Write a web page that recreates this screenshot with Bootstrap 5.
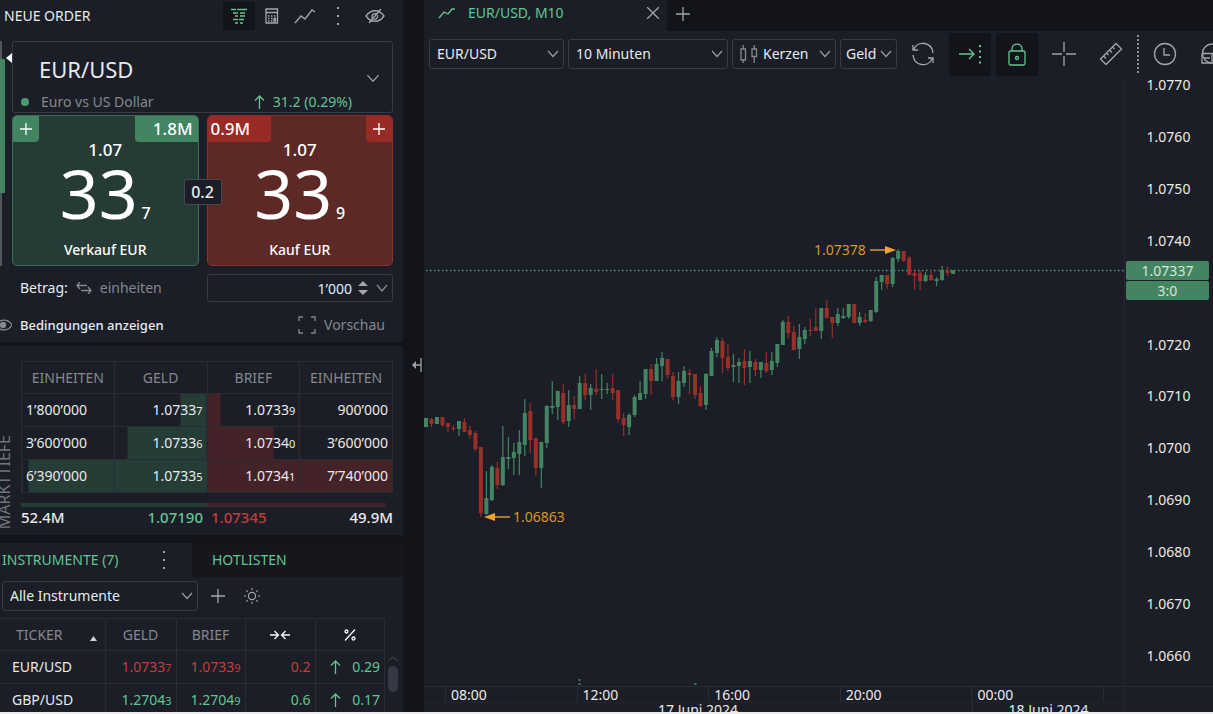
<!DOCTYPE html>
<html lang="de" data-bs-theme="dark">
<head>
<meta charset="utf-8">
<meta name="viewport" content="width=device-width, initial-scale=1">
<title>EUR/USD, M10</title>
<link href="https://cdn.jsdelivr.net/npm/bootstrap@5.3.0/dist/css/bootstrap.min.css" rel="stylesheet">
<style>
:root{--panel:#1b1e26;--deep:#121419;--line:#2b2e37;--edge:#383b44;--muted:#85888f;--fg:#e9eaec;--up:#62c592;--down:#c43d3a;--green:#428560;--red:#982b26}
body{font-family:"Noto Sans",sans-serif;font-size:14px;line-height:20px;background:var(--deep);color:var(--fg);border-bottom:2px solid #eceaea}
svg{fill:none;stroke:currentColor;stroke-width:1.3;flex:none;display:block}
.side{width:403px;flex:none}
.pane{background:var(--panel)}
.muted{color:var(--muted)}
.up{color:var(--up)}
.down{color:var(--down)}
.ico{width:32px;height:28px;padding:0;border:0;border-radius:2px;background:none;color:#a3a6ab;display:flex;align-items:center;justify-content:center;flex:none}
.ico.on{background:var(--deep);color:var(--up)}
.ico.muted{color:var(--muted)}
.tool{width:42px;height:43px}
.form-select,.form-control{background-color:var(--panel);border:1px solid var(--edge);border-radius:3px;color:var(--fg);font-size:14px;line-height:20px;height:30px;padding:0 24px 0 7px;min-width:0}
.form-select{background-image:url("data:image/svg+xml,%3csvg xmlns='http://www.w3.org/2000/svg' viewBox='0 0 12 8'%3e%3cpath fill='none' stroke='%239a9da3' stroke-width='1.2' d='M1 1l5 5.500 5-5.500'/%3e%3c/svg%3e");
 background-size:12px 8px;background-position:right 4px center}
.head-row{height:32px}
.order{padding:9px 10px 0 12px;height:310px}
.gauge{position:absolute;left:0;top:9px;width:5px;height:225px;border-left:2px solid #53565e}
.gauge i{position:absolute;left:-2px;top:18px;width:5px;height:134px;background:var(--green)}
.gauge b{position:absolute;left:4px;top:12px;border:5px solid transparent;border-left:0;border-right:6px solid #fff}
.symbol{border:1px solid var(--edge);border-radius:3px;height:72px}
.symbol .form-select{border:0;font-size:22px;line-height:30px;height:38px;padding-left:26px;background-size:14px 9px;background-position:right 12px bottom 5px}
.dot{width:8px;height:8px;border-radius:50%;background:#4f9b74}
.deals{margin-top:2px}
.deal{position:relative;flex:1 1 0;height:151px;border:1px solid;border-radius:5px;color:#fff;padding:24px 0 1px;text-align:center;display:flex;flex-direction:column;align-items:center;overflow:hidden}
.sell{background:#263b35;border-color:#3a6f57}
.buy{background:#5c2927;border-color:#8a2f2a}
.corner{position:absolute;top:0;font-size:17px;line-height:26px;height:26px;width:63px;padding:0 5px 0 3px;font-weight:500}
.sell .corner{background:var(--green)}
.buy .corner{background:var(--red)}
.corner.plus{width:26px;padding:7px}
.corner.start-0{border-bottom-right-radius:4px}
.corner.end-0{border-bottom-left-radius:4px}
.pip{font-size:17px;line-height:20px;font-weight:500}
.big{font-size:68px;line-height:66px}
.tail{font-size:16px;line-height:18px;font-weight:500}
.spread{position:absolute;left:50%;top:64px;transform:translateX(-50%);width:38px;height:26px;line-height:24px;text-align:center;font-size:16px;font-weight:500;background:var(--panel);border:1px solid #454851;border-radius:3px}
.terms{font-size:13px;font-weight:500}
.amount{width:186px;height:28px}
.amount .form-control{border:0;background:none;height:26px;padding:0 2px;text-align:right}
.grid-table{--bs-table-bg:transparent;--bs-table-color:var(--fg);table-layout:fixed;margin:0;border-color:var(--line)}
.grid-table th,.grid-table td{padding:0 4px;height:33px;vertical-align:middle;border:1px solid #292c35;font-weight:400;color:inherit;white-space:nowrap}
.grid-table th{color:var(--muted);text-align:center;padding:0;height:32px}
.grid-table small{font-size:11px}
.depth{padding:15px 10px 0 21px;height:189px}
.depth-name{position:absolute;left:-6px;bottom:6px;writing-mode:vertical-rl;transform:rotate(180deg);font-size:16px;color:#72757c}
.grid-table td.bid{background:linear-gradient(to left,#263c36 var(--fill),transparent 0)}
.grid-table td.ask{background:linear-gradient(to right,#432327 var(--fill),transparent 0)}
.totals{height:4px;margin-top:10px}
.sums{font-size:15px;font-weight:500;line-height:20px}
.sums .fg{font-size:14px}
.watch-tabs{height:34px;background:#15171c}
.watch-tabs .nav-link,.chart-tab{color:var(--up);padding:0;border:0;border-radius:0;font-size:14px}
.watch-tool{padding:4px 2px 7px}
.watch th:first-child,.watch td:first-child{border-left:0}
.watch .up{color:var(--up)}
.watch .down{color:var(--down)}
.scroller{width:10px;margin-left:3px;padding-top:38px;color:#3a3d46}
.thumb{height:26px;border-radius:5px;background:#363943}
.splitter{width:21px;flex:none;color:#9da0a6;padding:17px 0 0 6px}
.tabbar{height:31px}
.chart-tab{width:243px;height:31px;padding:0 4px 5px 14px;background:var(--panel)}
.tools{height:46px;gap:4px;padding-left:5px;overflow:hidden}
.tool-group{gap:5px;padding-left:1px}
.rule{border-left:2px dotted #8c8f95;height:38px}
.plot text{font-size:14px;fill:#d9962b;stroke:none}
.axis{width:89px;flex:none;border-left:1px solid #252830;line-height:16px;padding-bottom:22px;position:relative}
.axis span{padding-right:1px;height:16px}
.tag{position:absolute;left:1px;top:184px;width:83px;color:#d7e6dd}
.tag div{background:var(--green);line-height:19px;height:19px;border-radius:2px;margin-bottom:1px;text-align:center}
.times{height:26px;border-top:1px solid #292c35;overflow:hidden;line-height:16px}
.lead-in{width:3%;flex:none}
.hour{border-left:1px solid #292c35;padding-left:5px;width:18.8%;flex:none;height:15px;line-height:15px}
.days{border-top:1px solid #23262e;line-height:13px}
.day-one{width:78.3%;flex:none}
</style>
</head>
<body class="d-flex vh-100 overflow-hidden">

<aside class="side d-flex flex-column overflow-hidden">
 <section class="pane flex-shrink-0">
  <header class="head-row d-flex align-items-center">
   <span class="ms-1 me-auto">NEUE ORDER</span>
   <div class="d-flex me-2 pe-1" style="gap:1px">
    <button class="ico on" aria-label="Markttiefe"><svg width="16" height="16" viewBox="0 0 16 16"><path d="M0 1.500h5m1 0h10M2 5h5m2 0h5M4 8h3m2 0h5M2 11.500h5m1 0h5M4 15h3m2 0h3"/></svg></button>
    <button class="ico" aria-label="Rechner"><svg width="14" height="16" viewBox="0 0 14 16"><path d="M1 1h11.500v14H1zM1 4.500h11.500M3 8h1.500m1.500 0h1.500m1.500 0h1.500M3 10.500h1.500m1.500 0h1.500M3 13h1.500m1.500 0h1.500M9 10.500h1.500v2.500H9z"/></svg></button>
    <button class="ico" aria-label="Chart"><svg width="22" height="16" viewBox="0 0 22 16"><path d="M1 15l6-7 4 3 7-9 3 2"/></svg></button>
    <button class="ico" aria-label="Mehr"><svg width="4" height="18" viewBox="0 0 4 18"><path stroke="none" fill="currentColor" d="M1 0h2v2H1zM1 8h2v2H1zM1 16h2v2H1z"/></svg></button>
    <button class="ico ms-1" aria-label="Ausblenden"><svg width="20" height="16" viewBox="0 0 20 16"><path d="M1 8c5-7 13-7 18 0-5 7-13 7-18 0zM7.500 10.500c-2-4 2-6 4.500-4M12.500 7c1 3-2 5-4 4M4 15L16 1"/></svg></button>
   </div>
  </header>
  <div class="order position-relative">
   <div class="gauge"><i></i><b></b></div>
   <div class="symbol pt-2 d-flex flex-column">
    <select class="form-select" aria-label="Instrument"><option>EUR/USD</option></select>
    <div class="d-flex align-items-center pt-1 muted">
     <span class="dot ms-2 me-2"></span><span class="ms-1">Euro vs US Dollar</span>
     <span class="up ms-auto d-flex align-items-center gap-2 pe-4 me-3"><svg width="11" height="14" viewBox="0 0 11 14"><path d="M5.500 14V1M1 5.500L5.500 1 10 5.500"/></svg>31.2 (0.29%)</span>
    </div>
   </div>
   <div class="deals d-flex gap-2 position-relative">
    <button class="deal sell">
     <span class="corner plus start-0"><svg width="12" height="12" viewBox="0 0 12 12"><path d="M6 0v12M0 6h12"/></svg></span>
     <span class="corner end-0 text-end">1.8M</span>
     <span class="pip">1.07</span>
     <span class="d-flex align-items-end"><span class="big">33</span><span class="tail ps-1 pb-1">7</span></span>
     <span class="mt-auto pb-1 fw-medium">Verkauf EUR</span>
    </button>
    <button class="deal buy">
     <span class="corner start-0 text-start">0.9M</span>
     <span class="corner plus end-0"><svg width="12" height="12" viewBox="0 0 12 12"><path d="M6 0v12M0 6h12"/></svg></span>
     <span class="pip">1.07</span>
     <span class="d-flex align-items-end"><span class="big">33</span><span class="tail ps-1 pb-1">9</span></span>
     <span class="mt-auto pb-1 fw-medium">Kauf EUR</span>
    </button>
    <span class="spread">0.2</span>
   </div>
   <div class="d-flex align-items-center mt-2 ps-2">
    <label for="amount">Betrag:</label>
    <button class="ico muted" style="height:20px" aria-label="Einheit wechseln"><svg width="16" height="12" viewBox="0 0 16 12"><path d="M4 0L1 3.500 4 7M1 3.500h10M12 5l3 3.500-3 3.500M15 8.500H5"/></svg></button>
    <span class="muted">einheiten</span>
    <div class="amount symbol ms-auto d-flex align-items-center pe-1 muted">
     <input id="amount" class="form-control" value="1’000">
     <svg class="mx-1" width="10" height="14" viewBox="0 0 10 14"><path stroke="none" fill="#a3a6ab" d="M0 5l5-5 5 5zM0 9h10l-5 5z"/></svg>
     <svg class="ms-1" width="12" height="8" viewBox="0 0 12 8"><path d="M1 1l5 6 5-6"/></svg>
    </div>
   </div>
   <div class="d-flex align-items-center mt-2 pt-1">
    <svg class="muted" style="margin-left:-16px" width="16" height="12" viewBox="0 0 16 12"><path d="M0 6c4-6.500 12-6.500 16 0-4 6.500-12 6.500-16 0z"/><circle cx="7" cy="6" r="2.500" fill="currentColor"/></svg>
    <span class="terms ms-2">Bedingungen anzeigen</span>
    <button class="ico muted ms-auto w-auto gap-2 pe-1 me-1" style="height:22px"><svg width="18" height="18" viewBox="0 0 18 18"><path d="M1 5V1h4M13 1h4v4M17 13v4h-4M5 17H1v-4"/></svg>Vorschau</button>
   </div>
  </div>
 </section>

 <section class="pane depth position-relative mt-1 flex-shrink-0">
  <span class="depth-name">MARKTTIEFE</span>
  <table class="table grid-table">
   <thead><tr><th>EINHEITEN</th><th>GELD</th><th>BRIEF</th><th>EINHEITEN</th></tr></thead>
   <tbody>
    <tr><td>1’800’000</td><td class="bid text-end" style="--fill:28%">1.0733<small>7</small></td><td class="ask text-end" style="--fill:14%">1.0733<small>9</small></td><td class="text-end">900’000</td></tr>
    <tr><td>3’600’000</td><td class="bid text-end" style="--fill:86%">1.0733<small>6</small></td><td class="ask text-end" style="--fill:72%">1.0734<small>0</small></td><td class="text-end">3’600’000</td></tr>
    <tr><td class="bid" style="--fill:93%">6’390’000</td><td class="bid text-end" style="--fill:100%">1.0733<small>5</small></td><td class="ask text-end" style="--fill:100%">1.0734<small>1</small></td><td class="ask text-end" style="--fill:100%">7’740’000</td></tr>
   </tbody>
  </table>
  <div class="totals d-flex"><div class="w-50" style="background:#263c36"></div><div style="background:#432327;width:48%"></div></div>
  <div class="sums d-flex"><span class="w-50 d-flex justify-content-between pe-1"><span>52.4M</span><span class="up">1.07190</span></span><span class="w-50 d-flex justify-content-between ps-1"><span class="down">1.07345</span><span>49.9M</span></span></div>
 </section>

 <section class="pane flex-grow-1 mt-2 overflow-hidden">
  <ul class="nav watch-tabs flex-nowrap">
   <li class="nav-item pane d-flex align-items-center" style="width:192px"><a class="nav-link" style="padding-left:2px" href="#">INSTRUMENTE (7)</a><button class="ico ms-auto me-2" aria-label="Mehr"><svg class="me-2" width="4" height="18" viewBox="0 0 4 18"><path stroke="none" fill="currentColor" d="M1 0h2v2H1zM1 8h2v2H1zM1 16h2v2H1z"/></svg></button></li>
   <li class="nav-item d-flex align-items-center ps-3 ms-1"><a class="nav-link" href="#">HOTLISTEN</a></li>
  </ul>
  <div class="watch-tool d-flex align-items-center">
   <select class="form-select" style="width:196px" aria-label="Instrumentenliste"><option>Alle Instrumente</option></select>
   <button class="ico ms-1" aria-label="Hinzufügen"><svg width="14" height="14" viewBox="0 0 14 14"><path d="M7 0v14M0 7h14"/></svg></button>
   <button class="ico" style="margin-left:2px" aria-label="Einstellungen"><svg width="16" height="16" viewBox="0 0 18 18"><circle cx="9" cy="9" r="4"/><path d="M9 0v2.500M9 15.500V18M0 9h2.500M15.500 9H18M2.600 2.600l1.800 1.800M13.600 13.600l1.800 1.800M2.600 15.400l1.800-1.800M13.600 4.400l1.800-1.800"/></svg></button>
  </div>
  <div class="d-flex">
   <table class="table grid-table watch" style="width:385px">
    <colgroup><col style="width:105px"><col style="width:71px"><col style="width:69px"><col style="width:70px"><col></colgroup>
    <thead><tr><th><span class="d-flex align-items-center ps-3 pe-2">TICKER<svg class="ms-auto mt-2" width="7" height="5" viewBox="0 0 7 5"><path stroke="none" fill="#d0d1d4" d="M0 5l3.500-5L7 5z"/></svg></span></th><th>GELD</th><th>BRIEF</th>
     <th><svg class="mx-auto text-light" width="20" height="10" viewBox="0 0 20 10"><path d="M0 5h8M4.500 1l4 4-4 4M20 5h-8M15.500 1l-4 4 4 4"/></svg></th>
     <th><svg class="mx-auto text-light" width="12" height="12" viewBox="0 0 12 12"><path d="M1 11.500L11 .5"/><circle cx="2.500" cy="2.500" r="1.500"/><circle cx="9.500" cy="9.500" r="1.500"/></svg></th></tr></thead>
    <tbody>
     <tr><td><span class="ps-2">EUR/USD</span></td><td class="down text-end">1.0733<small>7</small></td><td class="down text-end">1.0733<small>9</small></td><td class="down text-end">0.2</td><td class="up"><span class="d-flex align-items-center justify-content-between ps-2"><svg width="11" height="14" viewBox="0 0 11 14" style="margin-left:2px"><path d="M5.500 14V1M1 5.500L5.500 1 10 5.500"/></svg>0.29</span></td></tr>
     <tr><td><span class="ps-2">GBP/USD</span></td><td class="up text-end">1.2704<small>3</small></td><td class="up text-end">1.2704<small>9</small></td><td class="up text-end">0.6</td><td class="up"><span class="d-flex align-items-center justify-content-between ps-2"><svg width="11" height="14" viewBox="0 0 11 14" style="margin-left:2px"><path d="M5.500 14V1M1 5.500L5.500 1 10 5.500"/></svg>0.17</span></td></tr>
    </tbody>
   </table>
   <div class="scroller"><svg width="10" height="6" viewBox="0 0 10 6"><path d="M0 5l5-4 5 4"/></svg><div class="thumb mt-1"></div></div>
  </div>
 </section>
</aside>

<div class="splitter d-flex align-items-center justify-content-center"><svg width="10" height="16" viewBox="0 0 10 16"><path d="M9 1v14M9 8H2"/><path fill="currentColor" d="M0 8l4-4v8z" stroke="none"/></svg></div>

<main class="flex-grow-1 d-flex flex-column overflow-hidden">
 <div class="tabbar d-flex">
  <div class="chart-tab d-flex align-items-center">
   <svg width="18" height="12" viewBox="0 0 18 12"><path d="M1 11l5-6 4 2 4-5 3 0"/></svg><a class="up text-decoration-none ms-2 ps-1" href="#">EUR/USD, M10</a>
   <button class="ico ms-auto w-auto px-1" style="height:20px" aria-label="Schliessen"><svg width="12" height="12" viewBox="0 0 12 12" stroke-width="1.600"><path d="M0 0l12 12M12 0L0 12"/></svg></button>
  </div>
  <button class="ico" style="height:27px" aria-label="Neuer Tab"><svg width="14" height="14" viewBox="0 0 14 14"><path d="M7 0v14M0 7h14"/></svg></button>
 </div>
 <div class="tools pane d-flex align-items-center">
  <select class="form-select flex-shrink-0" style="width:135px" aria-label="Symbol"><option>EUR/USD</option></select>
  <select class="form-select flex-shrink-0" style="width:160px" aria-label="Zeitrahmen"><option>10 Minuten</option></select>
  <div class="position-relative flex-shrink-0">
   <select class="form-select" style="width:104px;padding-left:30px" aria-label="Charttyp"><option>Kerzen</option></select>
   <svg class="position-absolute muted top-50 translate-middle-y start-0 ms-2" width="18" height="20" viewBox="0 0 18 20" stroke-width="1.200"><path d="M1 5h4.500v11H1zM3.200 1v4M3.200 16v3M12 5h4.500v7.500H12zM14.200 1v4M14.200 12.500V19"/></svg>
  </div>
  <select class="form-select flex-shrink-0" style="width:57px;padding:0 16px 0 5px" aria-label="Kursart"><option>Geld</option></select>
  <div class="tool-group d-flex align-items-center">
  <button class="ico tool" aria-label="Aktualisieren"><svg width="24" height="24" viewBox="0 0 24 24"><path d="M22 11C21 0 7-2 3 7M2 3v5h5M2 13c1 11 15 13 19 4M22 21v-5h-5"/></svg></button>
  <button class="ico tool on" aria-label="Autoscroll"><svg width="24" height="20" viewBox="0 0 24 20"><path d="M1 10h15M11 5l5 5-5 5"/><path stroke-dasharray="2 3.500" stroke-width="2" d="M22 1v19"/></svg></button>
  <button class="ico tool on" aria-label="Sperren"><svg width="18" height="23" viewBox="0 0 18 23"><rect x="1" y="8" width="16" height="14" rx="1.500"/><path d="M4 8V6c0-6.500 10-6.500 10 0v2"/><circle cx="9" cy="15" r="1.500"/></svg></button>
  <button class="ico tool" aria-label="Fadenkreuz"><svg width="24" height="24" viewBox="0 0 24 24"><path d="M12 0v10M12 14v10M0 12h10M14 12h10"/></svg></button>
  <button class="ico tool" aria-label="Messen"><svg width="24" height="24" viewBox="0 0 24 24"><path d="M1.500 17L17 1.500l5.500 5.500L7 22.500zM4.500 14l2.500 2.500M7.500 11l2 2M10.500 8l2.500 2.500M13.500 5l2 2"/></svg></button>
  <span class="rule"></span>
  <button class="ico tool" aria-label="Zeit"><svg width="24" height="24" viewBox="0 0 24 24"><circle cx="12" cy="12" r="10.500"/><path d="M11 6v7h6"/></svg></button>
  <button class="ico tool" aria-label="Objekte"><svg width="22" height="22" viewBox="0 0 22 22"><circle cx="11" cy="10.500" r="9.500"/><path d="M1 10.500h20M1 10.500V20h10v-9.500M3 15h6"/></svg></button>
  </div>
 </div>
 <div class="pane flex-grow-1 d-flex" style="min-height:0">
  <svg id="plot" class="plot flex-fill h-100" style="min-width:0" viewBox="424 77 700 609">
   <path d="M426 270.500H1124" stroke="#4c9a73" stroke-dasharray="1.500 2.500"/>
   <path d="M579.500 679v2m0 2v2m116-2v2" stroke="#3f7a5c" stroke-width="2"/>
   <g id="candles" stroke="none"></g>
   <text x="814" y="255">1.07378</text><text x="513" y="522">1.06863</text>
   <path d="M870 250h16M493 517h17" stroke="#d9962b"/><path d="M885 246l11 4-11 4zM495 513l-11 4 11 4z" fill="#f0a22d" stroke="none"/>
  </svg>
  <div class="axis d-flex flex-column justify-content-between align-items-center">
   <span>1.0770</span><span>1.0760</span><span>1.0750</span><span>1.0740</span><span></span><span>1.0720</span><span>1.0710</span><span>1.0700</span><span>1.0690</span><span>1.0680</span><span>1.0670</span><span>1.0660</span>
   <div class="tag"><div>1.07337</div><div>3:0</div></div>
  </div>
 </div>
 <div class="times pane d-flex">
  <div class="flex-grow-1 overflow-hidden">
   <div class="d-flex"><span class="lead-in"></span><span class="hour">08:00</span><span class="hour">12:00</span><span class="hour">16:00</span><span class="hour">20:00</span><span class="hour">00:00</span><span class="hour"></span></div>
   <div class="days d-flex text-center"><span class="day-one">17 Juni 2024</span><span class="flex-grow-1" style="border-left:1px solid #292c35">18 Juni 2024</span></div>
  </div>
  <div class="axis"></div>
 </div>
</main>

<script>
// Ten-minute candles: direction, wick top, body top, body bottom, wick bottom
const candles = `G418,418,427,427 R418,419,424,427 G417,417,424,424 R417,417,425,427 R423,423,427,432 R425,428,429,431 G421,421,429,436 R418,422,432,432 R426,430,435,439 R431,433,449,451
R447,447,513,517 G471,498,514,515 G465,467,500,501 R462,468,485,489 G426,457,485,486 G437,457,459,469 G443,452,458,475 G430,442,454,475 G399,413,445,456 R403,411,440,453
R438,438,468,476 G442,442,468,488 G405,406,443,448 G381,406,408,414 G391,391,407,420 R384,393,422,424 G390,405,421,427 R396,405,409,420 G376,383,409,409 R374,383,395,400
G384,388,395,410 R369,389,392,395 G374,389,390,399 G383,389,390,394 R374,388,393,400 R390,390,419,422 R413,418,425,436 G413,415,427,435 G395,397,415,417 G381,393,400,400
G369,369,394,399 R364,369,381,395 G358,364,381,381 G352,358,366,381 R359,359,375,378 R372,376,397,400 G372,381,397,404 G366,371,383,387 R369,373,375,394 R374,374,395,399
R386,393,406,407 G373,374,405,410 G348,351,376,376 G337,340,353,357 R338,341,358,373 R344,357,368,371 G354,365,367,382 G358,362,366,383 R349,361,368,385 G351,361,367,383
R359,362,370,376 G362,362,370,378 R352,363,371,373 G352,361,370,375 G344,344,363,367 G320,322,345,345 R316,322,333,338 R326,332,350,350 G324,337,349,359 G327,330,339,344
R319,330,331,336 R308,327,331,331 G308,308,331,339 R300,308,318,318 R317,317,323,338 G308,314,323,326 G308,316,318,319 G304,304,317,319 R304,304,323,323 G312,317,323,326
R313,320,322,323 G310,310,321,322 G277,281,312,313 G275,275,282,290 R275,275,284,289 G257,258,284,287 G249,251,259,262 R251,251,261,262 R256,258,275,275 R271,273,276,290
R271,273,281,290 G272,275,281,282 R270,275,280,281 G277,279,281,286 G266,270,280,281 R267,271,273,276 G270,270,274,274`.split(/\s+/);
const step = 5.49;
document.getElementById('candles').innerHTML = candles.map((c, i) => {
  const [t, a, b, l] = c.slice(1).split(',').map(Number), x = 426 + step * i, f = c[0] === 'G' ? '#438462' : '#992f29';
  return `<path fill="${f}" d="M${x - 2} ${a}h4v${Math.max(b - a, 1)}h-4zM${x - .6} ${t}h1.2v${l - t}h-1.2z"/>`;
}).join('');
</script>
<script src="https://cdn.jsdelivr.net/npm/bootstrap@5.3.0/dist/js/bootstrap.bundle.min.js"></script>
</body>
</html>
